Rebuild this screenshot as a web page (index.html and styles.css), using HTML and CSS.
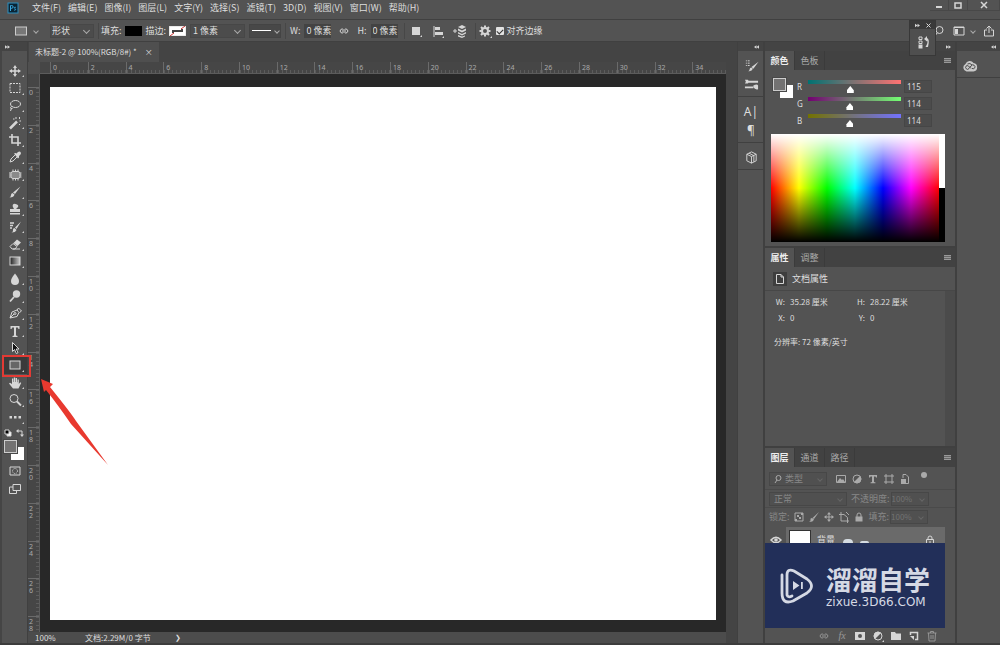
FILE: index.html
```html
<!DOCTYPE html>
<html lang="zh-CN">
<head>
<meta charset="utf-8">
<title>未标题-2</title>
<link rel="stylesheet" href="styles.css">
</head>
<body class="app">
<header class="menubar">
  <svg class="app-logo" viewBox="0 0 12 12" aria-hidden="true"><rect x="1" y="1" width="10" height="10" fill="#0a2434" stroke="#2c8fc0"/><path d="M3.500 9V3.500h1.200a1.300 1.300 0 0 1 0 2.800H3.500M8.800 5.300c-1.500-.6-2 .8-.8 1.300s.6 2-1 1.400" fill="none" stroke="#3aa9df"/></svg>
  <nav class="menus">
    <button>文件(F)</button><button>编辑(E)</button><button>图像(I)</button><button>图层(L)</button><button>文字(Y)</button><button>选择(S)</button><button>滤镜(T)</button><button>3D(D)</button><button>视图(V)</button><button>窗口(W)</button><button>帮助(H)</button>
  </nav>
  <div class="window-controls">
    <button aria-label="最小化"><svg viewBox="0 0 10 10"><path d="M2 7h6" stroke-width="2"/></svg></button>
    <button aria-label="最大化"><svg viewBox="0 0 10 10"><path d="M2 3h6v5H2z" stroke-width="1.500"/></svg></button>
    <button class="close" aria-label="关闭"><svg viewBox="0 0 10 10"><path d="M2 2l6 6M8 2l-6 6" stroke-width="1.500"/></svg></button>
  </div>
</header>

<div class="options">
  <button class="preset" aria-label="矩形工具预设"><svg viewBox="0 0 12 10"><rect x=".5" y="1" width="11" height="8" fill="#777" stroke="#ccc"/></svg><i class="chev"></i></button>
  <span class="select mode"><select aria-label="工具模式"><option>形状</option></select></span>
  <div class="group paint">
    <span>填充:</span><button class="chip black" aria-label="填充颜色"></button>
    <span>描边:</span><button class="chip" aria-label="描边颜色"><svg viewBox="0 0 17 10"><rect width="17" height="10" fill="#fff"/><path d="M4 7V5h9V3" fill="none" stroke="#444" stroke-width="2"/><path d="M1 10l4-3M12 3l4-3" stroke="#c33"/></svg></button>
    <span class="select stroke"><select aria-label="描边宽度"><option>1 像素</option></select></span>
    <button class="line-type" aria-label="描边类型"><b></b><i class="chev"></i></button>
  </div>
  <div class="group size">
    <label for="w">W:</label><input id="w" value="0 像素">
    <button aria-label="链接宽高"><svg class="link" viewBox="0 0 12 8"><path d="M5.500 2.500a2 2 0 1 0 0 3M6.500 2.500a2 2 0 1 1 0 3M4 4h4"/></svg></button>
    <label for="h">H:</label><input id="h" value="0 像素">
  </div>
  <div class="group ops">
    <button aria-label="路径操作"><svg viewBox="0 0 14 14"><path class="f" d="M3 3h8v8H3zM11 13l2-2v2z"/></svg></button>
    <button aria-label="路径对齐"><svg viewBox="0 0 14 14"><path d="M3 2v11"/><path class="f" d="M4 3h5v3H4zM4 8h8v3H4zM11 14l2-2v2z"/></svg></button>
    <button aria-label="路径排列"><svg viewBox="0 0 14 14"><path d="M0 7h4M2 5v4"/><path class="f" d="M9 1l4 2-4 2-4-2zM5 4.500l4 2 4-2v2l-4 2-4-2zM5 8l4 2 4-2v1.500l-4 2-4-2zM5 11l4 1.500 3-1v1L9 14l-4-1.500z"/></svg></button>
  </div>
  <div class="group edge">
    <button aria-label="设置"><svg viewBox="0 0 14 14"><circle cx="7" cy="7" r="3" stroke-width="2"/><path d="M7 1.500v2M7 10.500v2M1.500 7h2M10.500 7h2M3 3l1.500 1.500M9.500 9.500L11 11M11 3L9.500 4.500M4.500 9.500L3 11" stroke-width="2"/><path class="f" d="M12 14l2-2v2z"/></svg></button>
    <input type="checkbox" id="align" checked><label for="align">对齐边缘</label>
  </div>
  <div class="right-tools">
    <button aria-label="搜索"><svg viewBox="0 0 12 12"><circle cx="6.500" cy="5" r="3.500"/><path d="M4 8l-2 3"/></svg></button>
    <button class="ws" aria-label="工作区"><svg viewBox="0 0 12 12"><path d="M1 2h10v8H1z"/><path class="f" d="M2 4h3v5H2zM1 2h10v1H1z"/></svg><i class="chev"></i></button>
    <button aria-label="共享"><svg viewBox="0 0 12 12"><path d="M4 5H1.500v6h9V5H8M6 8V1M3.500 3.500L6 1l2.500 2.500"/></svg></button>
  </div>
  <aside class="floating">
    <div class="floating-head"><svg viewBox="0 0 6 4"><path class="f" d="M0 0l3 2-3 2zM3 0l3 2-3 2z"/></svg><svg viewBox="0 0 5 5"><path d="M.5.5l4 4M4.500.5l-4 4"/></svg></div>
    <button aria-label="历史记录"><svg viewBox="0 0 14 14"><path d="M3 2h3v2.500H3zM3 6h3v2.500H3z"/><path class="f" d="M2.500 9.500h4v4h-4zM8 4l3-3v2q3 1 1 9H9.500q3-5 1.500-6.500v1z"/></svg></button>
  </aside>
</div>

<main class="workspace">
  <aside class="toolcol">
    <div class="collapse left"><svg viewBox="0 0 6 4"><path class="f" d="M0 0l3 2-3 2zM3 0l3 2-3 2z"/></svg></div>
    <div class="toolbar">
      <div class="tools">
        <button aria-label="移动"><svg viewBox="0 0 14 14"><path d="M7 3v8M3 7h8" stroke-width="1.500"/><path class="f" d="M7 1l2 3H5zM7 13l2-3H5zM1 7l3-2v4zM13 7l-3-2v4z"/></svg></button>
        <button aria-label="矩形选框"><svg viewBox="0 0 14 14"><path d="M2 2.500h10v9H2z" stroke-dasharray="2 1"/></svg></button>
        <button aria-label="套索"><svg viewBox="0 0 14 14"><ellipse cx="7.500" cy="6" rx="5" ry="3.500"/><path d="M4 8.500c-2 0-2 3 .5 2M3.500 10l-1 3"/></svg></button>
        <button aria-label="魔棒"><svg viewBox="0 0 14 14"><path d="M2 12.500l7-7" stroke-width="2.500"/><path d="M8 1v2M11.500 1v2M13 5h-1.500M11 8l1 1M5 3h1.500"/></svg></button>
        <button aria-label="裁剪"><svg viewBox="0 0 14 14"><path d="M4 1v9h9M1 4h9v9" stroke-width="1.600"/></svg></button>
        <button aria-label="吸管"><svg viewBox="0 0 14 14"><path d="M2 12l1-3 4.500-4.500 2 2L5 11z"/><path class="f" d="M6 3.500L7.500 3l1 .5L10 2q1.500-1 2.500 0t0 2.500L11 6v1.500L10 8.500z"/></svg></button>
        <button aria-label="修补"><svg viewBox="0 0 14 14"><rect x="3" y="3.500" width="9" height="7" rx="2" fill="#8a8a8a"/><path d="M5 1.500v2M7.500 1.500v2M10 1.500v2M5 10.500v2M7.500 10.500v2M10 10.500v2M1 5h2M1 7h2M1 9h2M12 5h1.500M12 7h1.500M12 9h1.500"/></svg></button>
        <button aria-label="画笔"><svg viewBox="0 0 14 14"><path class="f" d="M12.500 1.500L7 9 5 7.500zM4.500 8l2 1.500Q6 12.500 1.500 12.500 3 11.500 3 10t1.500-2z"/></svg></button>
        <button aria-label="仿制图章"><svg viewBox="0 0 14 14"><path class="f" d="M6 7q-2-3-1-4.500t4 0T8 7h4v3H2V7zM2 11h10v1.500H2z"/></svg></button>
        <button aria-label="历史记录画笔"><svg viewBox="0 0 14 14"><path class="f" d="M13 1.500L8.500 9 7 7.500zM6.500 8l2 2q-1 2.500-5 2.500 2-1 1.500-2.500T6.500 8z"/><path d="M2 3h4M2 5.500h3M2 8h2" stroke-width="1.500"/></svg></button>
        <button aria-label="橡皮擦"><svg viewBox="0 0 14 14"><path d="M2 9.500l3-3 4 3-2 2.500H4zM5 12h7"/><path class="f" d="M5.500 6L9 2.500l4 3L9.500 9z"/></svg></button>
        <button aria-label="渐变"><svg viewBox="0 0 14 14"><defs><linearGradient id="grad"><stop stop-color="#222"/><stop offset="1" stop-color="#ccc"/></linearGradient></defs><rect x="2" y="3" width="10" height="8" fill="url(#grad)"/></svg></button>
        <button aria-label="模糊"><svg viewBox="0 0 14 14"><path class="f" d="M7 1.500q4 5 4 7.500a4 4 0 0 1-8 0q0-2.500 4-7.500z"/></svg></button>
        <button aria-label="减淡"><svg viewBox="0 0 14 14"><circle class="f" cx="8.500" cy="5" r="3.700"/><path d="M6 8l-4 4.500" stroke-width="1.800"/></svg></button>
        <button aria-label="钢笔"><svg viewBox="0 0 14 14"><path d="M2 12l2-6 5-2 2 2.500-2 4zM2 12l4-4M9 4l1.500-2 3 3L11.500 6.500"/><circle cx="7" cy="7.500" r="1"/></svg></button>
        <button aria-label="文字"><svg viewBox="0 0 14 14"><path class="f" d="M2.500 2h9v3h-1l-.7-1.500H8v8l1.500.5v1h-5v-1L6 11.500v-8H4.200L3.500 5h-1z"/></svg></button>
        <button aria-label="路径选择"><svg viewBox="0 0 14 14"><path d="M4.500 1.500v9l2-2 1.800 4 1.700-.8-1.800-3.700H11z" fill="#111"/></svg></button>
        <button class="active" aria-label="矩形"><svg viewBox="0 0 14 14"><rect x="2" y="3" width="10" height="8" fill="#666"/></svg></button>
        <button aria-label="抓手"><svg viewBox="0 0 14 14"><path class="f" d="M5 12.500L1 7.500l1-.7L4 8V2.500h1.300V6h.5V1.500h1.400V6h.5V2H9v4.200h.5V3.500h1.300V8l1.400-1.800 1 .8L10.500 12.500z"/></svg></button>
        <button aria-label="缩放"><svg viewBox="0 0 14 14"><circle cx="6" cy="5.500" r="4"/><path d="M9 8.500l4 4" stroke-width="1.800"/></svg></button>
        <button aria-label="更多"><svg viewBox="0 0 14 14"><path class="f" d="M1.500 6h2.500v2.500H1.500zM6 6h2.500v2.500H6zM10.500 6H13v2.500h-2.500z"/></svg></button>
      </div>
      <div class="mini">
        <button aria-label="默认颜色"><svg viewBox="0 0 8 8"><path d="M3 3h4v4H3z" fill="#fff"/><path d="M1 1h4v4H1z" fill="#000"/></svg></button>
        <button aria-label="切换颜色"><svg viewBox="0 0 8 8"><path d="M2 2h4v4"/><path class="f" d="M0 2l2.500-2v4zM6 8L4 5.500h4z"/></svg></button>
      </div>
      <div class="swatches"><button class="bg" aria-label="背景色"></button><button class="fg" aria-label="前景色"></button></div>
      <div class="modes">
        <button aria-label="快速蒙版"><svg viewBox="0 0 14 14"><path d="M2 3h10v8H2z"/><circle cx="7" cy="7" r="2.500" stroke-dasharray="1 1"/></svg></button>
        <button aria-label="屏幕模式"><svg viewBox="0 0 14 14"><path d="M5 2.500h7.500v6H5zM5 5H1.500v6.500h7v-3"/></svg></button>
      </div>
    </div>
  </aside>

  <section class="document">
    <div class="tabs"><div class="doc-tab"><span>未标题-2 @ 100%(RGB/8#) *</span><button aria-label="关闭文档">×</button></div></div>
    <div class="sheet">
      <div class="corner"></div>
      <div class="ruler-x"><div class="scale"><span>0</span><span>2</span><span>4</span><span>6</span><span>8</span><span>10</span><span>12</span><span>14</span><span>16</span><span>18</span><span>20</span><span>22</span><span>24</span><span>26</span><span>28</span><span>30</span><span>32</span><span>34</span></div></div>
      <div class="ruler-y"><div class="scale"><span>0</span><span>2</span><span>4</span><span>6</span><span>8</span><span>1<br>0</span><span>1<br>2</span><span>1<br>4</span><span>1<br>6</span><span>1<br>8</span><span>2<br>0</span><span>2<br>2</span><span>2<br>4</span><span>2<br>6</span><span>2<br>8</span></div></div>
      <div class="pasteboard"><div class="canvas"></div></div>
    </div>
    <footer class="status"><span class="zoom">100%</span><span class="info">文档:2.29M/0 字节</span><button aria-label="状态菜单">❯</button></footer>
  </section>

  <aside class="dock">
    <div class="collapse"><svg viewBox="0 0 6 4"><path class="f" d="M3 0L0 2l3 2zM6 0L3 2l3 2z"/></svg></div>
    <div class="dock-group">
      <button aria-label="画笔设置"><svg viewBox="0 0 16 16"><path d="M2 3h1M4 3h2M2 5.500h1M4 5.500h2M2 8h1M4 8h2"/><path class="f" d="M15.500 4L10 11.500 8 9.500zM7.500 10l2 1.500q-1 3-5 2.500 1.500-.5 1.500-2t1.500-2z"/></svg></button>
      <button aria-label="画笔"><svg viewBox="0 0 16 16"><path d="M5 5h10M1 11h9" stroke-width="2"/><path class="f" d="M1 3h3l2 2-2 2H1l1-2zM10 9q4-2 5 0v4q-3 1-5-2z"/></svg></button>
    </div>
    <div class="dock-group type">
      <button aria-label="字符">A|</button>
      <button aria-label="段落">¶</button>
    </div>
    <div class="dock-group">
      <button aria-label="3D"><svg viewBox="0 0 16 16"><path d="M8 2l5 2.500v7L8 14l-5-2.500v-7zM3 4.500L8 7l5-2.500M8 7v7M5.500 3.500l5 2.500v6.500"/></svg></button>
    </div>
  </aside>

  <div class="panels">
    <div class="collapse"><svg viewBox="0 0 6 4"><path class="f" d="M0 0l3 2-3 2zM3 0l3 2-3 2z"/></svg></div>
    <section class="panel">
      <div class="panel-tabs"><button class="on">颜色</button><button>色板</button><button class="burger" aria-label="面板菜单"></button></div>
      <div class="color-body">
        <div class="color-top">
          <div class="swatches"><button class="bg" aria-label="背景色"></button><button class="fg" aria-label="前景色"></button></div>
          <div class="channels">
            <div class="channel"><label for="r">R</label><input class="r" id="r" type="range" max="255" value="115"><input aria-label="R 值" value="115"></div>
            <div class="channel"><label for="g">G</label><input class="g" id="g" type="range" max="255" value="114"><input aria-label="G 值" value="114"></div>
            <div class="channel"><label for="b">B</label><input class="b" id="b" type="range" max="255" value="114"><input aria-label="B 值" value="114"></div>
          </div>
        </div>
        <div class="spectrum"><div class="hues"></div><div class="bw"></div></div>
      </div>
    </section>
    <section class="panel">
      <div class="panel-tabs"><button class="on">属性</button><button>调整</button><button class="burger" aria-label="面板菜单"></button></div>
      <div class="prop-head"><span class="doc-icon"><svg viewBox="0 0 12 12"><path d="M2.500 1.500H7l2.500 2.500v6.500h-7zM7 1.500V4h2.500"/></svg></span><span>文档属性</span></div>
      <div class="prop-body">
        <div class="prop-grid"><b>W:</b><span>35.28 厘米</span><b>H:</b><span>28.22 厘米</span><b>X:</b><span>0</span><b>Y:</b><span>0</span></div>
        <p>分辨率: 72 像素/英寸</p>
      </div>
    </section>
    <section class="panel layers">
      <div class="panel-tabs"><button class="on">图层</button><button>通道</button><button>路径</button><button class="burger" aria-label="面板菜单"></button></div>
      <div class="layer-row filter">
        <span class="select kind"><svg viewBox="0 0 10 10"><circle cx="5.500" cy="4" r="2.500"/><path d="M4 6L2 9"/></svg><select aria-label="图层过滤"><option>类型</option></select></span>
        <div class="filter-icons">
          <button aria-label="像素图层"><svg viewBox="0 0 12 12"><path d="M1.500 2.500h9v7h-9z"/><path class="f" d="M2 9l3-4 2 2 1-1 2 3z"/></svg></button>
          <button aria-label="调整图层"><svg viewBox="0 0 12 12"><circle cx="6" cy="6" r="4"/><path class="f" d="M9 3a4 4 0 0 1-6 6z"/></svg></button>
          <button aria-label="文字图层"><svg viewBox="0 0 12 12"><path class="f" d="M2 2h8v2.500H9L8.500 3.500H7V9l1.500.5v.8h-5v-.8L5 9V3.500H3.500L3 4.500H2z"/></svg></button>
          <button aria-label="形状图层"><svg viewBox="0 0 12 12"><path d="M3 1v10M9 1v10M1 3h10M1 9h10"/></svg></button>
          <button aria-label="智能对象"><svg viewBox="0 0 12 12"><path d="M4 5V1.500h3L9.500 4v6.500H7"/><path class="f" d="M2 6h5v5H2z"/></svg></button>
        </div>
        <i class="dot"></i>
      </div>
      <div class="layer-row blend">
        <span class="select blend-mode"><select aria-label="混合模式"><option>正常</option></select></span>
        <label for="op">不透明度:</label><span class="select pct"><select id="op"><option>100%</option></select></span>
      </div>
      <div class="layer-row lock">
        <span>锁定:</span>
        <div class="lock-icons">
          <button aria-label="锁定透明像素"><svg viewBox="0 0 12 12"><path d="M2 2h8v8H2z"/><path class="f" d="M4 4h2v2H4zM6 6h2v2H6zM8 2h2v2H8zM2 8h2v2H2z"/></svg></button>
          <button aria-label="锁定图像像素"><svg viewBox="0 0 12 12"><path class="f" d="M11 1L6 8 4.500 7zM4 7l2 1.500Q5 11 1 11q2-1 1.500-2.500T4 7z"/></svg></button>
          <button aria-label="锁定位置"><svg viewBox="0 0 12 12"><path d="M6 2v8M2 6h8"/><path class="f" d="M6 1l2 2.500H4zM6 11l2-2.500H4zM1 6l2.500-2v4zM11 6L8.500 4v4z"/></svg></button>
          <button aria-label="防止嵌套"><svg viewBox="0 0 12 12"><path d="M3 1v9h8M1 3.500h5l3.500 3V12M8 1l3 3"/></svg></button>
          <button aria-label="锁定全部"><svg viewBox="0 0 12 12"><path d="M4 6V4a2 2 0 0 1 4 0v2"/><path class="f" d="M2.500 5.500h7v5h-7z"/></svg></button>
        </div>
        <label for="fill">填充:</label><span class="select pct"><select id="fill"><option>100%</option></select></span>
      </div>
      <div class="layer-list">
        <div class="layer">
          <button class="eye" aria-label="可见性"><svg viewBox="0 0 12 12"><path d="M1 6q5-5.500 10 0Q6 11.500 1 6z" stroke-width="1.500"/><circle class="f" cx="6" cy="6" r="1.800"/></svg></button>
          <div class="layer-main"><span class="thumb"></span><span>背景</span><svg viewBox="0 0 12 12"><path d="M4 5V4a2 2 0 0 1 4 0v1M2.500 5.500h7v5h-7zM6 7v2"/></svg></div>
        </div>
        <div class="brand">
          <i class="bump"></i><i class="bump small"></i>
          <svg class="brand-logo" viewBox="0 0 36 38" aria-hidden="true"><path d="M3 8v18q0 12 11 8l14-8q9-7 0-14L15 4Q8 1 8 8v20q1 3 5 1" fill="none" stroke="#d5d9e4" stroke-width="2.800" stroke-linecap="round" stroke-linejoin="round"/><path d="M14 14l6.500 4.500-6.500 4.500zM22 15h1.800v7H22z" fill="#d5d9e4" stroke="none"/></svg>
          <div class="brand-text"><strong>溜溜自学</strong><span>zixue.3D66.COM</span></div>
        </div>
      </div>
      <div class="layer-actions">
        <button class="dim" aria-label="链接图层"><svg viewBox="0 0 12 12"><path d="M5.500 4.500a2 2 0 1 0 0 3M6.500 4.500a2 2 0 1 1 0 3M4 6h4"/></svg></button>
        <button class="dim fx">fx</button>
        <button aria-label="添加蒙版"><svg viewBox="0 0 12 12"><path class="f" fill-rule="evenodd" d="M1 2h10v8H1zM6 4a2 2 0 1 0 0 4 2 2 0 0 0 0-4z"/></svg></button>
        <button aria-label="新建调整图层"><svg viewBox="0 0 12 12"><circle cx="6" cy="6" r="4"/><path class="f" d="M9 3a4 4 0 0 0-6 6zM10 12l2-2v2z"/></svg></button>
        <button aria-label="新建组"><svg viewBox="0 0 12 12"><path class="f" d="M1 2h4l1 1.500h5V10H1z"/></svg></button>
        <button aria-label="新建图层"><svg viewBox="0 0 12 12"><path d="M2.500 5V2.500h7v7H7" stroke-width="1.500"/><path class="f" d="M2 6h4v4z"/></svg></button>
        <button class="dim" aria-label="删除"><svg viewBox="0 0 12 12"><path d="M1.500 3h9M4.500 3V1.500h3V3M2.500 3l.5 8h6l.5-8M5 5v4M7 5v4"/></svg></button>
      </div>
    </section>
  </div>

  <aside class="library">
    <div class="collapse"><svg viewBox="0 0 6 4"><path class="f" d="M3 0L0 2l3 2zM6 0L3 2l3 2z"/></svg></div>
    <button aria-label="库"><svg viewBox="0 0 16 14"><path d="M4.500 12.500a4 4 0 0 1-1-7.500 4.500 4.500 0 0 1 8-1 4.300 4.300 0 0 1 0 8.500z" fill="#c8c8c8" stroke="none"/><path d="M9 9.500L6.500 7Q5 6 4 7.200t.3 2.600 2.700-.3L9 7q1.500-2 3-.8t.8 2.600-2.800.7M5.500 5Q8 3.500 10 6" stroke="#4a4a4a" stroke-width="1"/></svg></button>
  </aside>
</main>
<div class="highlight"></div>
<svg class="arrow" viewBox="0 0 70 90" aria-hidden="true"><path d="M1 1L13 6L10 9Q31 35 36 43L68 87L31 46Q18 27 6 12L4 14Z" fill="#e8392f"/></svg>
</body>
</html>
```
FILE: styles.css
```css
* { box-sizing: border-box; }
.app {
  margin: 0;
  height: 100vh;
  display: flex;
  flex-direction: column;
  overflow: hidden;
  background: #535353;
  color: #dedede;
  font: 9px/12px "Noto Sans CJK SC", sans-serif;
  border-bottom: 2px solid #3c3c3c;
}
button, input, select {
  font: inherit;
  color: inherit;
  margin: 0;
  padding: 0;
  border: 0;
  background: none;
  white-space: nowrap;
}
button { display: flex; align-items: center; justify-content: center; }
svg { display: block; fill: none; stroke: #d6d6d6; stroke-width: 1; flex: none; }
.f { fill: #d6d6d6; stroke: none; }
.chev, .select::after {
  content: "";
  width: 4px;
  height: 4px;
  border: solid #aaa;
  border-width: 0 1px 1px 0;
  transform: rotate(45deg);
  flex: none;
}

/* Menu bar */
.menubar { display: flex; align-items: flex-start; height: 20px; border-bottom: 1px solid #404040; padding-left: 7px; }
.app-logo { width: 12px; height: 12px; margin: 2px 13px 0 0; }
.menus { display: flex; gap: 7px; padding-top: 2px; }
.window-controls { display: flex; margin-left: auto; }
.window-controls button { width: 19px; height: 11px; border: solid #484848; border-width: 0 1px 1px 0; }
.window-controls .close { width: 32px; }
.window-controls svg { width: 10px; height: 10px; }

/* Options bar */
.options { display: flex; align-items: center; height: 22px; position: relative; border-bottom: 1px solid #404040; }
.preset { gap: 7px; padding-left: 15px; }
.preset svg { width: 12px; height: 10px; }
.select { display: flex; align-items: center; border: 1px solid #474747; background: #4c4c4c; height: 14px; padding-right: 4px; }
.select select { appearance: none; flex: 1; min-width: 0; height: 12px; line-height: 12px; }
.mode { width: 44px; margin-left: 12px; padding-left: 1px; }
.group { display: flex; align-items: center; height: 16px; border-left: 1px solid #474747; margin-left: 6px; padding-left: 2px; }
.paint { margin-left: 4px; }
.chip { width: 17px; height: 10px; margin: 0 4px 0 3px; background: #fff; }
.chip svg { width: 17px; height: 10px; }
.chip.black { background: #000; }
.stroke { width: 55px; padding-left: 2px; }
.line-type { width: 32px; height: 14px; gap: 4px; margin-left: 4px; border: 1px solid #444; background: #484848; }
.line-type b { width: 19px; height: 1px; background: #fff; }
.size { margin-left: 4px; padding-left: 4px; gap: 4px; }
.size input { width: 27px; height: 14px; background: #434343; padding-left: 2px; }
.size button { margin: 0 3px; }
.link { width: 12px; height: 8px; }
.ops { gap: 8px; padding-left: 4px; }
.ops svg, .edge svg { width: 14px; height: 14px; }
.edge { margin-left: 8px; }
.edge button { margin-right: 4px; }
.edge input { appearance: none; width: 8px; height: 8px; background: #e3e3e3; border-radius: 1px; margin-right: 3px; display: grid; place-items: center; }
.edge input:checked::after { content: ""; width: 3px; height: 5px; border: solid #333; border-width: 0 1px 1px 0; transform: rotate(45deg); }
.right-tools { display: flex; gap: 8px; margin-left: auto; padding-right: 5px; }
.right-tools svg { width: 12px; height: 12px; }
.ws { gap: 6px; }
.floating { position: absolute; right: 64px; top: 0; width: 27px; height: 36px; z-index: 3; background: #4f4f4f; border: 1px solid #383838; }
.floating-head { height: 8px; background: #3a3a3a; display: flex; align-items: center; justify-content: space-between; padding: 0 4px 0 5px; }
.floating-head svg { width: 5px; height: 5px; }
.floating button { width: 25px; height: 26px; }
.floating button svg { width: 14px; height: 14px; }

/* Workspace */
.workspace { flex: 1; min-height: 0; display: flex; }
.collapse { height: 9px; flex: none; background: #444; display: flex; align-items: center; justify-content: flex-end; padding-right: 4px; }
.collapse svg { width: 5px; height: 4px; }
.collapse.left { justify-content: flex-start; padding-left: 5px; }

/* Toolbar */
.toolcol { width: 28px; flex: none; display: flex; flex-direction: column; border-right: 1px solid #404040; }
.toolbar { flex: 1; padding-top: 11px; border-left: 2px solid #454545; }
.tools { display: flex; flex-direction: column; height: 364px; }
.tools button, .modes button { flex: 1; width: 25px; position: relative; }
.tools svg, .modes svg { width: 14px; height: 14px; }
.tools button::after { content: ""; position: absolute; right: 3px; bottom: 2px; border: 1px solid; border-color: transparent #ccc #ccc transparent; }
.tools .active { background: #3a3a3a; }
.mini { display: flex; gap: 4px; padding: 3px 0 3px 2px; }
.mini svg { width: 8px; height: 8px; }
.swatches { position: relative; width: 20px; height: 20px; flex: none; }
.swatches button { position: absolute; width: 13px; height: 13px; }
.swatches .fg { left: 0; top: 0; background: #737272; border: 1px solid #ccc; outline: 1px solid #484848; }
.swatches .bg { right: 0; bottom: 0; background: #fff; }
.toolbar .swatches { margin-left: 2px; }
.modes { display: flex; flex-direction: column; height: 36px; margin-top: 2px; }

/* Document */
.document { flex: 1; min-width: 0; display: flex; flex-direction: column; background: #444; }
.tabs { height: 20px; display: flex; padding-left: 1px; }
.doc-tab { display: flex; align-items: center; gap: 8px; background: #4f4f4f; padding: 0 6px; font-size: 8px; }
.sheet { flex: 1; min-height: 0; display: grid; grid-template-columns: 12px 1fr; grid-template-rows: 12px 1fr; margin-right: 11px; }
.corner { background: #4f4f4f; }
.ruler-x, .ruler-y { overflow: hidden; background: #464646; color: #aaa; font: 7px/7px "Noto Sans", sans-serif; }
.ruler-x { border-bottom: 1px solid #5c5c5c; }
.ruler-y { border-right: 1px solid #5c5c5c; }
.scale { display: flex; }
.ruler-x .scale { width: 680px; height: 11px; margin-left: 10px; }
.ruler-y .scale { flex-direction: column; height: 567px; margin-top: 13px; }
.scale span { flex: 1; }
.ruler-x span { padding: 2px 0 0 2px; border-left: 1px solid #6a6a6a; background: repeating-linear-gradient(to right, #5c5c5c 0 1px, transparent 1px 4px) 0 100% / 100% 3px no-repeat; }
.ruler-y span { padding: 1px 0 0 1px; border-top: 1px solid #6a6a6a; background: repeating-linear-gradient(to bottom, #5c5c5c 0 1px, transparent 1px 4px) 100% 0 / 3px 100% no-repeat; }
.pasteboard { background: #282828; display: flex; padding: 13px 10px 12px; }
.canvas { flex: 1; background: #fff; }
.status { height: 11px; display: flex; align-items: center; background: #4c4c4c; line-height: 11px; font-size: 8px; margin-right: 11px; }
.zoom { width: 33px; padding-left: 7px; }
.info { margin-left: 24px; }
.status button { font-size: 7px; margin-left: 24px; }

/* Icon dock */
.dock { width: 28px; flex: none; border: solid #404040; border-width: 0 2px 0 1px; }
.dock-group { padding: 5px 0 2px; border-bottom: 1px solid #404040; }
.dock-group button { width: 26px; height: 19px; }
.dock-group svg { width: 15px; height: 15px; }
.type button { font: 12px/18px "Noto Sans", sans-serif; }

/* Panels */
.panels { width: 190px; flex: none; display: flex; flex-direction: column; }
.panel { border-bottom: 2px solid #404040; }
.panel-tabs { display: flex; height: 19px; background: #424242; }
.panel-tabs button { width: 30px; color: #aaa; border-right: 1px solid #3b3b3b; }
.panel-tabs .on { background: #535353; color: #eee; font-weight: 700; }
.panel-tabs .burger { width: 7px; height: 5px; margin: 7px 4px 0 auto; border: 0; background: repeating-linear-gradient(#999 0 1px, #666 1px 2px); }
.color-body { padding: 6px 10px 4px 6px; }
.color-top { display: flex; padding: 2px 0 0 2px; }
.channels { padding-left: 4px; }
.channel { display: flex; align-items: center; height: 17px; font: 8px/12px "Noto Sans", sans-serif; }
.channel label { width: 11px; }
.channel input:not([type]) { width: 28px; height: 13px; margin-left: 3px; border: 1px solid #464646; background: #4c4c4c; padding-left: 2px; }
.channel [type="range"] { appearance: none; width: 93px; height: 15px; background: linear-gradient(to right, var(--from), #737272 45%, var(--to)) 0 1px / 100% 4px no-repeat; }
.channel [type="range"]::-webkit-slider-thumb { appearance: none; width: 7px; height: 7px; margin-top: 6px; background: #fff; clip-path: polygon(50% 0, 100% 60%, 100% 100%, 0 100%, 0 60%); }
.r { --from: #007272; --to: #ff7272; }
.g { --from: #730072; --to: #73ff72; }
.b { --from: #737200; --to: #7372ff; }
.spectrum { display: flex; height: 108px; margin-top: 5px; }
.hues { flex: 1; background: linear-gradient(to bottom, #fff, rgba(255,255,255,0) 50%, rgba(0,0,0,0) 50%, #000), linear-gradient(to right, #f00, #ff0, #0f0, #0ff, #00f, #f0f, #f00); }
.bw { width: 6px; background: linear-gradient(#fff 50%, #000 50%); }
.prop-head { display: flex; align-items: center; gap: 5px; height: 24px; padding-left: 8px; border-bottom: 1px solid #474747; }
.doc-icon { padding: 1px; background: #3e3e3e; }
.doc-icon svg { width: 12px; height: 12px; }
.prop-body { height: 155px; padding: 5px 0 0 9px; border-right: 10px solid #4b4b4b; font-size: 8px; }
.prop-grid { display: grid; grid-template-columns: 11px 59px 11px 1fr; gap: 4px 5px; }
.prop-grid b { font-weight: 400; text-align: right; }
.prop-body p { margin: 12px 0 0; }
.layers { flex: 1; min-height: 0; display: flex; flex-direction: column; border: 0; }
.layers .panel-tabs { flex: none; }
.layer-row { display: flex; align-items: center; height: 18px; flex: none; border-bottom: 1px solid #4a4a4a; color: #888; padding: 0 10px 0 4px; }
.layer-row svg { width: 12px; height: 12px; stroke: #aaa; }
.layer-row .f { fill: #aaa; }
.layer-row .select { background: #505050; }
.layer-row .select::after { border-color: #666; width: 3px; height: 3px; }
.filter { height: 23px; padding-top: 2px; }
.kind { width: 58px; padding-left: 3px; }
.kind svg { width: 10px; height: 10px; margin-right: 2px; }
.filter-icons { display: flex; gap: 4px; margin-left: 8px; }
.dot { width: 6px; height: 6px; border-radius: 50%; background: #aaa; margin: 0 0 8px 10px; }
.blend-mode { width: 78px; padding-left: 4px; }
.blend label { margin: 0 1px 0 4px; }
.pct { width: 38px; color: #737373; font-size: 8px; }
.lock-icons { display: flex; gap: 3px; margin: 0 4px 0 3px; }
.lock { border-bottom: 0; }
.lock .pct { margin-left: 1px; }
.layer-list { flex: 1; min-height: 0; position: relative; padding-top: 1px; margin-right: 10px; }
.layer { display: flex; height: 25px; }
.eye { width: 21px; }
.eye svg { width: 12px; height: 12px; }
.layer-main { flex: 1; display: flex; align-items: center; gap: 6px; background: #6a6a6a; padding: 0 9px 0 3px; }
.layer-main svg { width: 12px; height: 12px; margin-left: auto; }
.thumb { width: 22px; height: 20px; background: #fff; border: 1px solid #333; }
.brand { position: absolute; inset: 17px 0 0 0; background: #222f59; display: flex; align-items: center; gap: 11px; padding-left: 14px; color: #d5d9e4; }
.brand-logo { width: 36px; height: 38px; }
.brand-text { display: flex; flex-direction: column; }
.brand-text strong { font: 700 26px/32px "Noto Sans CJK SC", sans-serif; }
.brand-text span { font: 12px/14px "DejaVu Sans", sans-serif; }
.bump { position: absolute; left: 78px; top: -4px; width: 10px; height: 4px; border-radius: 5px 5px 0 0; background: #d5dce2; }
.bump.small { left: 95px; top: -2px; height: 2px; width: 9px; }
.layer-actions { height: 15px; flex: none; display: flex; align-items: center; gap: 6px; justify-content: flex-end; padding-right: 17px; }
.layer-actions svg { width: 12px; height: 12px; }
.layer-actions .dim { opacity: .5; }
.fx { width: 12px; font: italic 10px/12px "Liberation Serif", serif; }

/* Library column */
.library { flex: none; width: 45px; border-left: 2px solid #404040; }
.library button { width: 43px; height: 27px; padding: 3px 17px 0 0; border-bottom: 1px solid #404040; }
.library button svg { width: 16px; height: 14px; }

/* Annotation */
.highlight { position: absolute; left: 2px; top: 355px; width: 29px; height: 22px; border: 2px solid #e33a34; }
.arrow { position: absolute; left: 40px; top: 378px; width: 70px; height: 90px; stroke: none; }
```
